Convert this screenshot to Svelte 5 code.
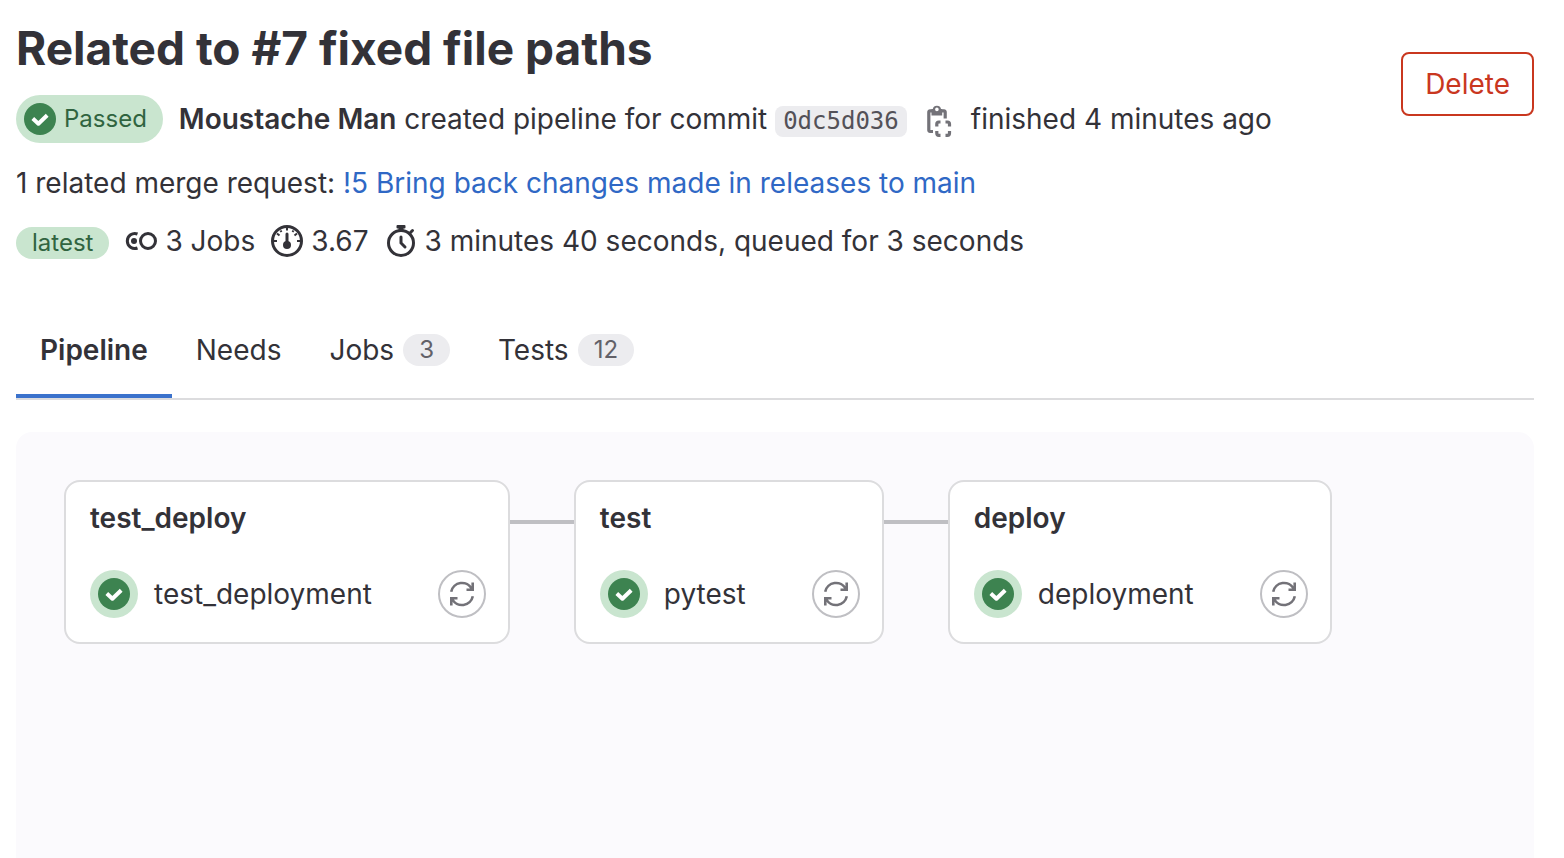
<script>
  const tabs = [
    { label: 'Pipeline', active: true },
    { label: 'Needs' },
    { label: 'Jobs', count: 3 },
    { label: 'Tests', count: 12 },
  ];
  const stages = [
    { name: 'test_deploy', job: 'test_deployment' },
    { name: 'test', job: 'pytest' },
    { name: 'deploy', job: 'deployment' },
  ];
</script>

{#snippet check()}
  <svg class="icon" viewBox="0 0 32 32" aria-hidden="true">
    <circle cx="16" cy="16" r="16" fill="#3d8350" />
    <path d="M8.8 15.6 14.4 20.7 23.2 12.3" fill="none" stroke="#fff" stroke-width="4" stroke-linejoin="round" />
  </svg>
{/snippet}

<main>
  <header>
    <div class="summary">
      <h1>Related to #7 fixed file paths</h1>
      <div class="row status">
        <span class="passed">{@render check()}Passed</span>
        <span class="created"><b>Moustache Man</b> created pipeline for commit</span>
        <span class="commit">
          <a class="sha" href="#commit">0dc5d036</a>
          <button class="copy" aria-label="Copy commit SHA">
            <svg class="icon" viewBox="0 0 32 32" fill="none" stroke="#737278" stroke-width="3.200" aria-hidden="true">
              <path d="M10 26.500H7A1.200 1.200 0 0 1 5.800 25.300V7A1.200 1.200 0 0 1 7 5.800H10M18 5.800H21A1.200 1.200 0 0 1 22.200 7V13.500" />
              <path d="M8.500 10.500V4H9.800A4.200 4.200 0 0 1 18 4H19.200V10.500ZM13.900 2.600A1.800 1.800 0 1 0 13.900 6.200A1.800 1.800 0 1 0 13.900 2.600Z" fill="#737278" fill-rule="evenodd" stroke="none" />
              <path d="M13.800 21.500V19A2 2 0 0 1 15.800 17H17.500M22.500 17H24.500A2 2 0 0 1 26.500 19V21.500M26.500 26V28.300A2 2 0 0 1 24.500 30.300H22.500M17.500 30.300H15.800A2 2 0 0 1 13.800 28.300V26" />
            </svg>
          </button>
        </span>
        <span>finished 4 minutes ago</span>
      </div>
      <p class="related">1 related merge request: <a href="#mr">!5 Bring back changes made in releases to main</a></p>
      <div class="row stats">
        <span class="latest">latest</span>
        <span class="stat">
          <svg class="icon" viewBox="0 0 32 32" fill="none" stroke="#333238" stroke-width="3" aria-hidden="true">
            <path d="M12.500 9A7.500 7.500 0 1 0 12.500 23" />
            <circle cx="23" cy="16" r="7.500" />
            <circle cx="9" cy="16" r="3" fill="#333238" stroke="none" />
          </svg>
          3 Jobs
        </span>
        <span class="stat">
          <svg class="icon" viewBox="0 0 32 32" fill="none" stroke="#333238" stroke-width="3" aria-hidden="true">
            <circle cx="16" cy="16" r="14.500" />
            <path d="M16 9V20" stroke-linecap="round" />
            <circle cx="16" cy="20" r="4" fill="#333238" stroke="none" />
            <path d="M16 2V5.500M2 16H6M26 16H30M6 8.500 8.500 10.500M26 8.500 23.500 10.500M9.500 5.500 10.500 7M22.500 5.500 21.500 7" stroke-width="2" />
          </svg>
          3.67
        </span>
        <span class="stat">
          <svg class="icon" viewBox="0 0 32 32" fill="none" stroke="#333238" stroke-width="3" aria-hidden="true">
            <circle cx="16" cy="18" r="12.500" />
            <path d="M16 12V18L20 22M25.500 7.500 27.500 5.500" stroke-linecap="round" />
            <path d="M12.500 0H19.500A1 1 0 0 1 20.500 1V2.500A1 1 0 0 1 19.500 3.500H18.500V6H13.500V3.500H12.500A1 1 0 0 1 11.500 2.500V1A1 1 0 0 1 12.500 0Z" fill="#333238" stroke="none" />
          </svg>
          3 minutes 40 seconds, queued for 3 seconds
        </span>
      </div>
    </div>
    <button class="delete">Delete</button>
  </header>

  <nav>
    {#each tabs as tab}
      <a href="#{tab.label}" class:active={tab.active}>
        {tab.label}
        {#if tab.count}<span class="count">{tab.count}</span>{/if}
      </a>
    {/each}
  </nav>

  <section class="graph">
    {#each stages as stage}
      <article>
        <h2>{stage.name}</h2>
        <div class="job">
          <a href="#{stage.job}"><span class="halo">{@render check()}</span>{stage.job}</a>
          <button class="retry" aria-label="Retry {stage.job}">
            <svg class="icon" viewBox="0 0 32 32" fill="none" stroke="#737278" stroke-width="2.600" aria-hidden="true">
              <path d="M5.200 13.800A11 11 0 0 1 25.800 11M26.700 4.500V11.700H20.500" />
              <path d="M26.800 18.200A11 11 0 0 1 6.200 21M5.300 27.500V20.300H11.500" />
            </svg>
          </button>
        </div>
      </article>
    {/each}
  </section>
</main>

<style>
  :global(body) {
    margin: 0;
    background: #fff;
  }
  :global(html),
  :global(body),
  :global(#app) {
    height: 100%;
  }
  main {
    box-sizing: border-box;
    min-height: 100%;
    display: flex;
    flex-direction: column;
    padding: 16px 30px 0 16px;
    font: 28px/40px Inter, sans-serif;
    color: #333238;
  }
  h1,
  h2,
  p {
    margin: 0;
  }
  a {
    color: inherit;
    text-decoration: none;
  }
  button {
    font: inherit;
    background: none;
    cursor: pointer;
  }
  .icon {
    display: block;
    flex: none;
    width: 32px;
    height: 32px;
  }
  header {
    display: flex;
    justify-content: space-between;
    align-items: flex-start;
  }
  h1 {
    font-size: 46px;
    line-height: 64px;
    font-weight: 700;
  }
  .row {
    display: flex;
    align-items: center;
  }
  .status {
    margin-top: 15px;
  }
  .passed {
    display: flex;
    align-items: center;
    gap: 8px;
    height: 48px;
    box-sizing: border-box;
    padding: 0 16px 0 8px;
    margin-right: 16px;
    border-radius: 24px;
    background: #c9e5cf;
    color: #306440;
    font-size: 24px;
  }
  b,
  h2,
  .active {
    font-weight: 600;
  }
  .commit {
    display: flex;
    align-items: center;
    gap: 16px;
    padding-top: 4px;
    margin: 0 16px 0 8px;
  }
  .sha {
    padding: 0 8px;
    border-radius: 8px;
    background: #ececef;
    color: #535158;
    font: 24px/31px "DejaVu Sans Mono", monospace;
  }
  .copy {
    border: 0;
    padding: 0;
  }
  .related {
    margin-top: 20px;
  }
  .related a {
    color: #2f68c5;
  }
  .stats {
    gap: 16px;
    margin-top: 18px;
  }
  .latest {
    padding: 0 16px;
    margin-top: 3px;
    border-radius: 16px;
    background: #c9e5cf;
    color: #306440;
    font-size: 24px;
    line-height: 32px;
  }
  .stat {
    display: flex;
    align-items: center;
    gap: 8px;
  }
  .delete {
    margin-top: 36px;
    height: 64px;
    padding: 0 22px;
    border: 2px solid #c9371f;
    border-radius: 8px;
    color: #c9371f;
  }
  nav {
    display: flex;
    margin-top: 41px;
    border-bottom: 2px solid #dcdcde;
  }
  nav a {
    display: flex;
    align-items: center;
    gap: 9px;
    padding: 28px 24px;
    white-space: nowrap;
  }
  .active {
    box-shadow: inset 0 -4px #3b72cc;
  }
  .count {
    padding: 0 16px;
    border-radius: 16px;
    background: #ececef;
    color: #626168;
    font-size: 24px;
    line-height: 32px;
  }
  .graph {
    flex: 1;
    display: flex;
    align-items: flex-start;
    gap: 64px;
    margin-top: 32px;
    padding: 48px;
    border-radius: 16px 16px 0 0;
    background: #fbfafd;
  }
  article {
    position: relative;
    padding: 16px 22px 24px 24px;
    border: 2px solid #dcdcde;
    border-radius: 16px;
    background: #fff;
  }
  article:not(:last-child)::after {
    content: "";
    position: absolute;
    left: calc(100% + 2px);
    top: 38px;
    width: 64px;
    height: 4px;
    background: #bfbfc3;
  }
  h2 {
    font-size: 28px;
    line-height: 40px;
  }
  .job {
    display: flex;
    align-items: center;
    justify-content: space-between;
    gap: 66px;
    margin-top: 32px;
  }
  .job a {
    display: flex;
    align-items: center;
    gap: 16px;
  }
  .halo {
    padding: 8px;
    border-radius: 50%;
    background: #c9e5cf;
  }
  .retry {
    display: grid;
    place-items: center;
    box-sizing: border-box;
    width: 48px;
    height: 48px;
    padding: 0;
    border: 2px solid #bfbfc3;
    border-radius: 50%;
  }
</style>
